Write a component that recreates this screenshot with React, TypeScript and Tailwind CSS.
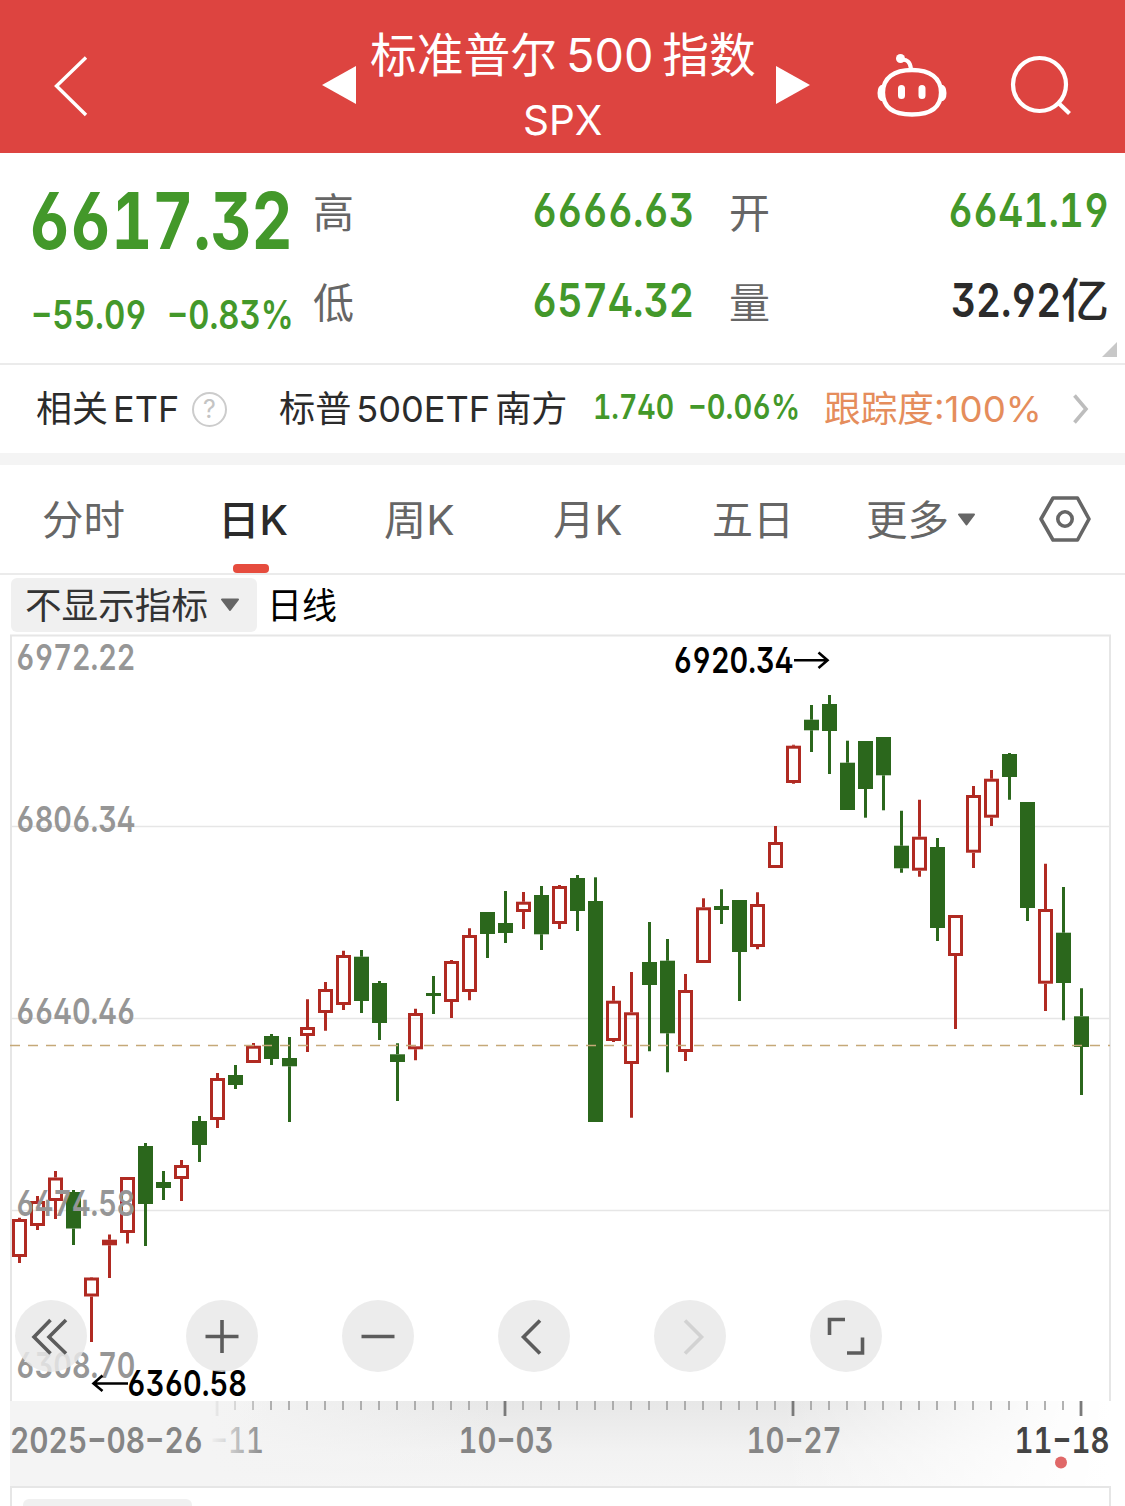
import { useLayoutEffect, useRef, type ReactNode } from 'react';
import clsx from 'clsx';

// [direction, high, body top, body bottom, low] in chart units
type Candle = ['u' | 'd', number, number, number, number];

const candles: Candle[] = [
  ['u', 1217.7, 1219, 1257, 1263], ['u', 1196, 1201, 1226, 1230], ['u', 1171, 1177.5, 1201, 1219], ['d', 1190, 1192, 1228.5, 1245],
  ['u', 1277, 1277.5, 1296.5, 1342], ['u', 1234.5, 1239.7, 1245.3, 1278], ['u', 1177, 1177, 1233, 1243.5], ['d', 1143, 1146, 1204, 1246],
  ['d', 1171, 1182, 1188, 1200], ['u', 1160, 1165, 1179, 1201], ['d', 1116, 1121, 1145, 1162], ['u', 1073, 1078, 1120, 1128],
  ['d', 1065, 1075, 1085, 1089], ['u', 1043, 1045.7, 1063, 1063], ['d', 1034, 1036, 1059, 1065], ['d', 1037, 1058, 1066.3, 1122],
  ['u', 999.3, 1027, 1036, 1052], ['u', 982, 989, 1013, 1030.7], ['u', 950.7, 955, 1005, 1010], ['d', 950, 956.7, 1001, 1013],
  ['d', 981, 983, 1023, 1040], ['d', 1043.3, 1054.3, 1062, 1101], ['u', 1008.7, 1013, 1049.3, 1060.3], ['d', 976, 993, 996, 1014],
  ['u', 960, 961, 1002, 1018], ['u', 928.3, 935, 992, 1000.3], ['d', 912, 912, 934, 958], ['d', 891, 923, 933, 943],
  ['u', 892, 901.7, 912, 929], ['d', 886, 895, 934.3, 950], ['u', 885, 886, 924, 929], ['d', 875, 878, 911, 931],
  ['d', 877.3, 901, 1122, 1122], ['u', 986, 1000.7, 1041, 1042], ['u', 972, 1012.3, 1064, 1117.7], ['d', 922, 962, 985, 1051.3],
  ['d', 939, 960.7, 1033.3, 1072.3], ['u', 974, 990, 1052, 1061], ['u', 898.3, 907.3, 963, 963], ['d', 889.3, 906, 910, 924],
  ['d', 900, 900, 952, 1001], ['u', 892.3, 904, 947, 949.3], ['u', 826, 842, 868, 868], ['u', 744.7, 745.7, 783, 783.7],
  ['d', 705, 719.7, 730.3, 752], ['d', 695, 704, 731, 774], ['d', 740.7, 762.7, 810, 810], ['d', 741, 741, 789, 817.7],
  ['d', 737, 737, 775.3, 810.3], ['d', 810.7, 845.7, 868.3, 872.7], ['u', 799.7, 836.7, 870.7, 876.7], ['d', 838, 847, 928, 941],
  ['u', 915, 915, 956, 1029], ['u', 786, 795, 852.7, 868], ['u', 770, 778.7, 817.7, 826], ['d', 753, 754, 777, 799.7],
  ['d', 802, 802, 908, 921], ['u', 863.7, 909, 983.7, 1011], ['d', 887, 932.7, 983, 1020.3], ['d', 988.3, 1016.3, 1047, 1095],
];

const UP = '#b02a22';
const DOWN = '#2b671c';

const DIN = "font-['Inter','Noto_Sans_CJK_SC',sans-serif] [font-feature-settings:'tnum','ss01']";

// Squeezes or stretches its text to the width given by className
function Fit({ className, children }: { className?: string; children: ReactNode }) {
  const outer = useRef<HTMLDivElement>(null);
  const inner = useRef<HTMLSpanElement>(null);

  useLayoutEffect(() => {
    if (!outer.current || !inner.current) return;
    inner.current.style.transform = `scaleX(${outer.current.clientWidth / inner.current.offsetWidth})`;
  });

  return (
    <div ref={outer} className={clsx('shrink-0', className)}>
      <span ref={inner} className="inline-block origin-left whitespace-nowrap align-top">{children}</span>
    </div>
  );
}

function Header() {
  return (
    <header className="flex h-[153px] bg-[#dd4440] text-white">
      <svg className="ml-[50px] mt-[52px] h-[68px] w-[42px] shrink-0" viewBox="50 52 42 68" fill="none" stroke="currentColor" strokeWidth="3.4">
        <path d="M86 57.500 56.500 86 86 115" />
      </svg>
      <svg className="ml-[230px] mt-[66px] h-[38px] w-[34px] shrink-0" viewBox="0 0 34 38" fill="currentColor">
        <path d="M0 19 34 0V38Z" />
      </svg>
      <div className="ml-[13px] flex w-[387px] flex-col items-center pt-[25px]">
        <Fit className="h-[60px] w-[386px] text-[47px] leading-[60px]">标准普尔<span className="mx-[9px]">500</span>指数</Fit>
        <Fit className="mt-[6px] h-[58px] w-[79px] text-[41px] leading-[58px]">SPX</Fit>
      </div>
      <svg className="ml-[20px] mt-[66px] h-[38px] w-[34px] shrink-0" viewBox="0 0 34 38" fill="currentColor">
        <path d="M0 0 34 19 0 38Z" />
      </svg>
      <svg className="ml-[66px] mt-[52px] h-[68px] w-[72px] shrink-0" viewBox="876 52 72 68" fill="none" stroke="currentColor" strokeWidth="4.300">
        <path d="M912 70C930 70 941 78 941 92.500S931 114.500 912 114.500 883 107 883 92.500 894 70 912 70Z" />
        <path d="M883 84.500Q877.500 85 877.500 93T883 101.500ZM941 84.500Q946.500 85 946.500 93T941 101.500Z" fill="currentColor" stroke="none" />
        <path d="M901.500 88.500V95.500M922 88.500V95.500" strokeWidth="7" strokeLinecap="round" />
        <path d="M901 60Q910 58.500 911 69" strokeWidth="4" />
        <circle cx="900.500" cy="58.500" r="4.500" fill="currentColor" stroke="none" />
      </svg>
      <svg className="ml-[58px] mt-[52px] h-[68px] w-[70px] shrink-0" viewBox="1006 52 70 68" fill="none" stroke="currentColor" strokeWidth="4.200">
        <circle cx="1039.500" cy="84.500" r="26.500" />
        <path d="M1058.500 103 1069.500 113.500" />
      </svg>
    </header>
  );
}

function Quote() {
  return (
    <section className="flex h-[212px] border-b-2 border-[#ebebeb] text-[#43982a]">
      <div className={clsx('ml-[29px] w-[284px] pt-[27px]', DIN)}>
        <Fit className="h-[80px] w-[264px] text-[79px] font-bold leading-[80px]">6617.32</Fit>
        <div className="mt-[31px] flex">
          <Fit className="ml-[2px] h-[48px] w-[116px] text-[39px] font-semibold leading-[48px]">−55.09</Fit>
          <Fit className="ml-[20px] h-[48px] w-[127px] text-[39px] font-semibold leading-[48px]">−0.83%</Fit>
        </div>
      </div>
      <div className="flex flex-col gap-[30px] pt-[27px]">
        {[
          { a: '高', av: '6666.63', b: '开', bv: '6641.19', unit: '' },
          { a: '低', av: '6574.32', b: '量', bv: '32.92', unit: '亿' },
        ].map(r => (
          <div key={r.a} className="flex h-[60px]">
            <div className="w-[41px] pt-[3px] text-[41px] leading-[60px] text-[#666]">{r.a}</div>
            <Fit className={clsx('ml-[178px] w-[162px] text-[47px] font-semibold leading-[60px]', DIN)}>{r.av}</Fit>
            <div className="ml-[35px] w-[41px] pt-[3px] text-[41px] leading-[60px] text-[#666]">{r.b}</div>
            {r.unit ? (
              <div className={clsx('ml-[181px] flex text-[47px] leading-[60px] text-[#2b2b2b]', DIN)}>
                <Fit className="w-[110px] font-semibold">{r.bv}</Fit>
                <Fit className="w-[48px] font-medium">{r.unit}</Fit>
              </div>
            ) : (
              <Fit className={clsx('ml-[178px] w-[161px] text-[47px] font-semibold leading-[60px]', DIN)}>{r.bv}</Fit>
            )}
          </div>
        ))}
      </div>
      <svg className="-mr-[7px] -ml-[7px] mt-[189px] h-[15px] w-[15px] shrink-0" viewBox="0 0 15 15">
        <path d="M15 0V15H0Z" fill="#c8c8c8" />
      </svg>
    </section>
  );
}

function EtfRow() {
  return (
    <section className="flex h-[100px] items-center border-b-[12px] border-[#f4f4f4] text-[36px] leading-[50px] text-[#2b2b2b]">
      <Fit className="ml-[36px] w-[143px]">相关<span className="ml-[5px]">ETF</span></Fit>
      <div className="ml-[13px] flex size-[35px] items-center justify-center rounded-full border-[2.5px] border-[#ccc] text-[25px] leading-none text-[#c4c4c4]">?</div>
      <Fit className="ml-[52px] w-[288px]">标普<span className="mx-[5px]">500ETF</span>南方</Fit>
      <Fit className={clsx('-mt-[4px] ml-[26px] w-[81px] text-[34px] font-semibold text-[#43982a]', DIN)}>1.740</Fit>
      <Fit className={clsx('-mt-[4px] ml-[14px] w-[112px] text-[34px] font-semibold text-[#43982a]', DIN)}>−0.06%</Fit>
      <Fit className="ml-[24px] w-[218px] text-[#e58d5c]">跟踪度:100%</Fit>
      <svg className="ml-[31px] h-[30px] w-[16px] shrink-0" viewBox="0 0 16 30" fill="none" stroke="#bdbdbd" strokeWidth="3.600">
        <path d="M1.500 1.500 13 15 1.500 28.500" />
      </svg>
    </section>
  );
}

function Tabs() {
  return (
    <nav className="flex h-[110px] border-b-2 border-[#ebebeb] text-[41px] leading-[111px] text-[#666]">
      <Fit className="ml-[42px] w-[83px]">分时</Fit>
      <div className="ml-[93px] flex w-[70px] flex-col items-center text-[#2b2b2b]">
        <Fit className="h-[99px] w-[70px] font-medium">日K</Fit>
        <div className="-ml-[4px] h-[9px] w-[36px] rounded-[4px] bg-[#e64c3e]" />
      </div>
      <Fit className="ml-[96px] w-[71px]">周K</Fit>
      <Fit className="ml-[98px] w-[70px]">月K</Fit>
      <Fit className="ml-[89px] w-[82px]">五日</Fit>
      <Fit className="ml-[72px] w-[83px]">更多</Fit>
      <svg className="ml-[8px] mt-[48px] h-[13px] w-[19px] shrink-0" viewBox="0 0 19 13">
        <path d="M2 1.500H17L9.500 11.500Z" fill="#666" stroke="#666" strokeWidth="2" strokeLinejoin="round" />
      </svg>
      <svg className="ml-[62px] mt-[30px] h-[48px] w-[54px] shrink-0" viewBox="0 0 54 48" fill="none" stroke="#666" strokeWidth="3.600">
        <path d="M15 3H39.500L51 24 39.500 45H15L3 24Z" strokeLinejoin="round" />
        <circle cx="27" cy="24" r="7.200" />
      </svg>
    </nav>
  );
}

function ChartToolbar() {
  return (
    <div className="flex h-[59px] pl-[11px] pt-[3px] text-[36px] leading-[56px]">
      <div className="flex h-[54px] w-[246px] items-center rounded-[6px] bg-[#f0f0f0] text-[#333]">
        <Fit className="ml-[14px] h-[54px] w-[183px]">不显示指标</Fit>
        <svg className="ml-[12px] h-[14px] w-[20px]" viewBox="0 0 20 14">
          <path d="M2 1.500H18L10 12Z" fill="#666" stroke="#666" strokeWidth="2" strokeLinejoin="round" />
        </svg>
      </div>
      <Fit className="ml-[10px] w-[70px] text-black">日线</Fit>
    </div>
  );
}

type LabelProps = { x: number; y: number; w: number; fill: string; children: string; weight?: number };

function Label({ x, y, w, fill, children, weight = 500 }: LabelProps) {
  return (
    <text x={x} y={y} textLength={w} lengthAdjust="spacingAndGlyphs" fill={fill} fontSize="35.500" fontWeight={weight} className={DIN}>
      {children}
    </text>
  );
}

const levels: [string, number][] = [
  ['6972.22', 670], ['6806.34', 832], ['6640.46', 1024], ['6474.58', 1215.5], ['6308.70', 1377.5],
];

function Chart() {
  return (
    <svg className="block h-[767px] w-[1125px]" viewBox="0 634 1125 767">
      <path d="M11 1401V635.500H1110V1401" fill="none" stroke="#e6e6e6" strokeWidth="2" />
      {[826.5, 1018.5, 1210.5].map(y => (
        <path key={y} d={`M12 ${y}H1109`} stroke="#e6e6e6" strokeWidth="1.500" />
      ))}
      {candles.map(([dir, high, top, bottom, low], i) => {
        const x = 19.5 + i * 18;
        const color = dir === 'u' ? UP : DOWN;
        return (
          <g key={i}>
            <path d={`M${x} ${high}V${top}M${x} ${bottom}V${low}`} stroke={color} strokeWidth="3" />
            {dir === 'u' ? (
              <rect x={x - 6} y={top + 1.5} width="12" height={bottom - top - 3} fill="none" stroke={color} strokeWidth="3" />
            ) : (
              <rect x={x - 7.5} y={top} width="15" height={bottom - top} fill={color} />
            )}
          </g>
        );
      })}
      <path d="M10 1045.500H1110" stroke="#c5a978" strokeWidth="1.400" strokeDasharray="10 8" />
      {levels.map(([text, y]) => (
        <Label key={text} x={16} y={y} w={119.5} fill="#969696" weight={600}>{text}</Label>
      ))}
      <Label x={673.5} y={673} w={120} fill="#000" weight={600}>6920.34</Label>
      <path d="M794 660.300H827M818.500 652.500 827.500 660.300 818.500 668" fill="none" stroke="#000" strokeWidth="2.600" />
      <Label x={127} y={1396} w={120} fill="#000" weight={600}>6360.58</Label>
      <path d="M128 1383.500H94M102.500 1375.500 93.500 1383.500 102.500 1391" fill="none" stroke="#000" strokeWidth="2.600" />
    </svg>
  );
}

const controls: { name: string; path: string; muted?: boolean }[] = [
  { name: 'first', path: 'M35.500 20 19 37 35.500 53.500M51 20 34 37 51 53.500' },
  { name: 'zoom in', path: 'M19.500 36.500H52.500M36 20V53' },
  { name: 'zoom out', path: 'M19.500 36.500H52.500' },
  { name: 'previous', path: 'M42 20.500 25.500 37 42 53.500' },
  { name: 'next', path: 'M31 20.500 47.500 37 31 53.500', muted: true },
  { name: 'expand', path: 'M19.500 35V19.500H35M37 53H52.500V37.500' },
];

function ChartControls() {
  return (
    <div className="absolute left-[15px] top-[666px] flex gap-[84px]">
      {controls.map((c, i) => (
        <button key={c.name} aria-label={c.name} className={clsx('size-[72px] rounded-full bg-[#e9e9e9]/85', i === 0 && 'mr-[15px]')}>
          <svg className="size-[72px]" viewBox="0 0 72 72" fill="none" stroke={c.muted ? '#d2d2d2' : '#5c5c5c'} strokeWidth="3.600">
            <path d={c.path} />
          </svg>
        </button>
      ))}
    </div>
  );
}

function DateAxis() {
  return (
    <svg className="block h-[85px] w-[1125px]" viewBox="0 1401 1125 85">
      <defs>
        <linearGradient id="band" x1="0" y1="0" x2="0" y2="1">
          <stop offset="0" stopColor="#e7e7e7" />
          <stop offset="0.600" stopColor="#f2f2f2" />
          <stop offset="1" stopColor="#f5f5f5" />
        </linearGradient>
        <linearGradient id="right" x1="0" y1="0" x2="1" y2="0">
          <stop offset="0" stopColor="#fff" stopOpacity="0" />
          <stop offset="0.850" stopColor="#fff" stopOpacity="0.900" />
          <stop offset="1" stopColor="#fff" />
        </linearGradient>
        <linearGradient id="left" gradientUnits="userSpaceOnUse" x1="212" y1="0" x2="268" y2="0">
          <stop offset="0" stopColor="#f4f4f4" stopOpacity="0.950" />
          <stop offset="0.200" stopColor="#f4f4f4" stopOpacity="0.800" />
          <stop offset="1" stopColor="#f4f4f4" stopOpacity="0" />
        </linearGradient>
        <linearGradient id="soft" gradientUnits="userSpaceOnUse" x1="210" y1="0" x2="500" y2="0">
          <stop offset="0" stopColor="#f4f4f4" />
          <stop offset="1" stopColor="#f4f4f4" stopOpacity="0" />
        </linearGradient>
      </defs>
      <rect x="10" y="1401" width="1100" height="85" fill="url(#band)" />
      <rect x="10" y="1401" width="490" height="85" fill="url(#soft)" />
      <rect x="780" y="1401" width="330" height="85" fill="url(#right)" />
      {Array.from({ length: 49 }, (_, i) => {
        const x = 217 + i * 18;
        return i % 16 === 0 ? (
          <path key={i} d={`M${x} 1401V1416`} stroke="#7a7a7a" strokeWidth="2.800" />
        ) : (
          <path key={i} d={`M${x} 1401V1410`} stroke="#999" strokeWidth="1.500" />
        );
      })}
      <Label x={210} y={1453} w={54} fill="#808080">−11</Label>
      <rect x="205" y="1401" width="65" height="85" fill="url(#left)" />
      <Label x={10} y={1453} w={193} fill="#858585" weight={600}>2025−08−26</Label>
      <Label x={458.5} y={1453} w={95} fill="#858585" weight={600}>10−03</Label>
      <Label x={746.5} y={1453} w={95} fill="#858585" weight={600}>10−27</Label>
      <Label x={1014.5} y={1453} w={95} fill="#444" weight={600}>11−18</Label>
      <circle cx="1061" cy="1462.500" r="6" fill="#e06868" />
    </svg>
  );
}

export default function App() {
  return (
    <div className="h-[1506px] w-[1125px] overflow-hidden bg-white font-['Inter','Noto_Sans_CJK_SC',sans-serif]">
      <Header />
      <Quote />
      <EtfRow />
      <Tabs />
      <ChartToolbar />
      <div className="relative">
        <Chart />
        <ChartControls />
      </div>
      <DateAxis />
      <div className="ml-[10px] h-[20px] w-[1101px] border-2 border-b-0 border-[#e6e6e6] pl-[11px] pt-[11px]">
        <div className="h-[54px] w-[169px] rounded-[6px] bg-[#f0f0f0]" />
      </div>
    </div>
  );
}
